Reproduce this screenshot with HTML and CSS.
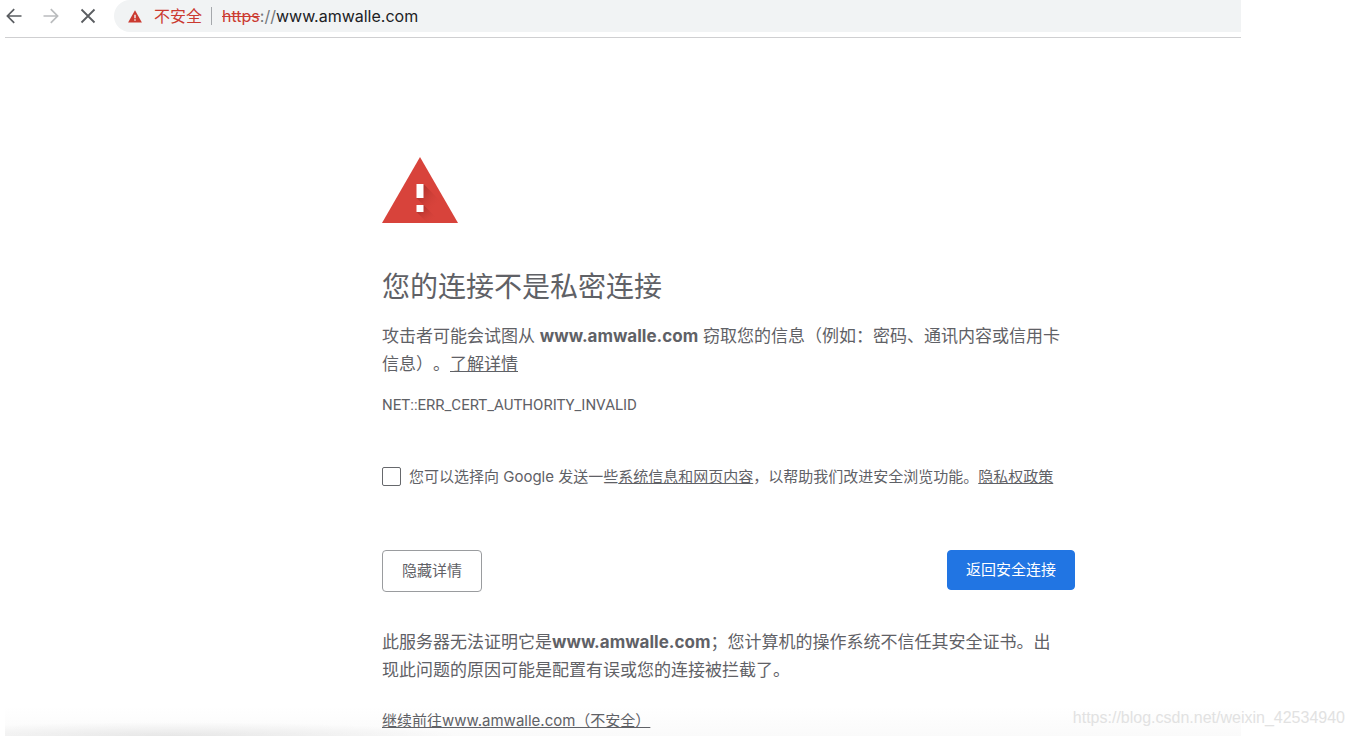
FILE: index.html
```html
<!DOCTYPE html>
<html lang="zh-CN">
<head>
<meta charset="utf-8">
<title>隐私设置错误</title>
<link rel="stylesheet" href="styles.css">
</head>
<body>
<div class="browser">
  <header class="toolbar">
    <button class="tool" type="button" aria-label="后退">
      <svg width="16" height="16" viewBox="0 0 16 16" fill="none" stroke="#5a5d61" stroke-width="1.7"><path d="M15.5 8H1.8M8.2 1.2 1.4 8l6.8 6.8"/></svg>
    </button>
    <button class="tool" type="button" aria-label="前进" disabled>
      <svg width="16" height="16" viewBox="0 0 16 16" fill="none" stroke="#babcbe" stroke-width="1.7"><path d="M.5 8h13.7M7.8 1.2 14.6 8l-6.8 6.8"/></svg>
    </button>
    <button class="tool" type="button" aria-label="停止">
      <svg width="16" height="16" viewBox="0 0 16 16" fill="none" stroke="#5a5d61" stroke-width="1.8"><path d="m1.5 1.5 13 13m0-13-13 13"/></svg>
    </button>
    <div class="address">
      <svg class="address-icon" width="14" height="13" viewBox="0 0 14 13"><path fill="#cb3a30" d="M7 .3 13.9 12.6H.1z"/><path fill="#f1f3f4" d="M6.300 4.800h1.400v3.400H6.300zM6.300 9.300h1.400v1.400H6.300z"/></svg>
      <span class="address-state">不安全</span>
      <span class="address-divider"></span>
      <span class="address-url"><s class="scheme">https</s><span class="slashes">://</span>www.amwalle.com</span>
    </div>
  </header>
  <main class="warning">
    <svg class="warning-icon" width="76" height="66" viewBox="0 0 76 66">
      <defs>
        <linearGradient id="shade" x1="0" y1="0" x2="1" y2="1"><stop offset="0.2" stop-color="#a92f2a" stop-opacity=".8"/><stop offset=".8" stop-color="#d8433b" stop-opacity="0"/></linearGradient>
      </defs>
      <path fill="#d8433b" d="M38 0 76 66H0z"/>
      <path fill="url(#shade)" d="M41.500 27 58 43.500V58H51L34.500 41z"/>
      <path fill="url(#shade)" d="M41.500 48 58 64.500V66H45.500L34.500 55z"/>
      <path fill="#fff" d="M34.500 27h7v14h-7zM34.500 48h7v7h-7z"/>
    </svg>
    <h1 class="title">您的连接不是私密连接</h1>
    <p class="text">攻击者可能会试图从 <strong>www.amwalle.com</strong> 窃取您的信息（例如：密码、通讯内容或信用卡信息）。<a class="link" href="#">了解详情</a></p>
    <p class="code">NET::ERR_CERT_AUTHORITY_INVALID</p>
    <div class="report">
      <input class="check" type="checkbox" id="report">
      <label for="report">您可以选择向 Google 发送一些<a class="link" href="#">系统信息和网页内容</a>，以帮助我们改进安全浏览功能。<a class="link" href="#">隐私权政策</a></label>
    </div>
    <div class="actions">
      <button class="button" type="button">隐藏详情</button>
      <button class="button primary" type="button">返回安全连接</button>
    </div>
    <p class="text">此服务器无法证明它是<strong>www.amwalle.com</strong>；您计算机的操作系统不信任其安全证书。出现此问题的原因可能是配置有误或您的连接被拦截了。</p>
    <p class="proceed"><a class="link" href="#">继续前往www.amwalle.com（不安全）</a></p>
  </main>
</div>
<div class="watermark">https://blog.csdn.net/weixin_42534940</div>
</body>
</html>
```
FILE: styles.css
```css
* {
  box-sizing: border-box;
}

body {
  margin: 0;
  min-height: 100vh;
  position: relative;
  overflow: hidden;
  background: #fff;
  color: #5f6166;
  font: 15px/24px Inter, "Noto Sans CJK SC", sans-serif;
  text-spacing-trim: space-all;
}

h1,
p {
  margin: 0;
}

.browser {
  min-height: 100vh;
  margin: 0 113px 0 5px;
  background:
    radial-gradient(ellipse 60% 100% at 35% 100%, #00000014, #00000000) left 0 bottom 0 / 480px 14px no-repeat,
    linear-gradient(#fff, #fafafa) left bottom / 100% 30px no-repeat;
}

.toolbar {
  display: flex;
  align-items: center;
  height: 38px;
  padding: 0 0 5px 1px;
  border-bottom: 1px solid #cfcfd1;
}

.tool {
  display: flex;
  margin-right: 21px;
  padding: 0;
  border: 0;
  background: none;
}

.address {
  display: flex;
  flex: 1;
  align-items: center;
  height: 32px;
  margin-left: -3px;
  padding-left: 14px;
  border-radius: 16px 0 0 16px;
  background: #f1f3f4;
  font-size: 16px;
}

.address-state {
  margin-left: 12px;
  color: #cb3a30;
}

.address-divider {
  width: 1px;
  height: 18px;
  margin: 0 10px 0 9px;
  background: #a5a8ac;
}

.address-url {
  color: #202124;
}

.scheme {
  color: #cb3a30;
}

.slashes {
  color: #74777b;
}

.warning {
  max-width: 1070px;
  padding: 119px 0 0 377px;
}

.warning-icon {
  display: block;
}

.title {
  margin-top: 44px;
  font-size: 28px;
  font-weight: 400;
  line-height: 40px;
}

.text {
  max-width: 680px;
  font-size: 17px;
  line-height: 28px;
}

.title + .text {
  margin-top: 15px;
}

.link {
  color: inherit;
  text-decoration: underline;
}

.code {
  margin-top: 15px;
  font-family: Roboto, sans-serif;
}

.report {
  display: flex;
  align-items: flex-start;
  gap: 8px;
  margin-top: 48px;
}

.check {
  appearance: none;
  width: 19px;
  height: 19px;
  margin: 2px 0 0;
  border: 1px solid #66686c;
  border-radius: 2px;
  background: #fff;
}

.actions {
  display: flex;
  justify-content: space-between;
  align-items: flex-start;
  margin: 61px 0 36px;
}

.button {
  padding: 8px 19px;
  border: 1px solid #9a9c9f;
  border-radius: 4px;
  background: #fff;
  color: inherit;
  font: inherit;
}

.primary {
  padding: 7px 18px;
  border-color: #2175e3;
  background: #2175e3;
  color: #fff;
}

.proceed {
  margin-top: 25px;
}

.watermark {
  position: absolute;
  right: 9px;
  bottom: 6px;
  color: #e2e2e2;
  font-family: "Liberation Sans", sans-serif;
  font-size: 16px;
}
```
